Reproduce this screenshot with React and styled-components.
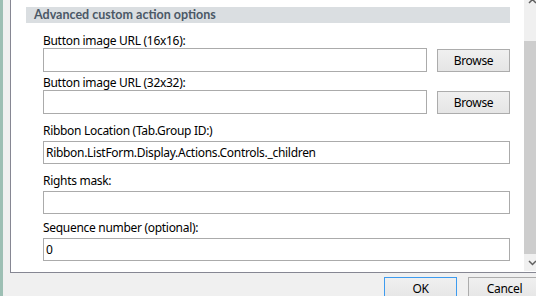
import React from 'react';
import styled, { createGlobalStyle } from 'styled-components';

const GlobalStyle = createGlobalStyle`
  html, body {
    margin: 0;
    padding: 0;
    overflow: hidden;
    background: #f0f0f0;
  }
  body {
    font-family: "Noto Sans", "Open Sans", sans-serif;
    font-size: 12px;
    letter-spacing: -0.3px;
    color: #000;
  }
`;

const Window = styled.div`
  width: 548px;
  height: 296px;
  display: flex;
  flex-direction: column;
  background: #f0f0f0;
  border-left: 3px solid #9dbfb4;
  box-sizing: border-box;
`;

const Panel = styled.div`
  display: flex;
  height: 275px;
  margin: 0 6px 0 7px;
  background: #fff;
  border: 1px solid #868793;
  border-top: none;
  box-sizing: border-box;
`;

const Content = styled.div`
  flex: 1;
  padding: 7px 14px 0 15px;
  overflow: hidden;
`;

const SectionHeader = styled.div`
  height: 16px;
  line-height: 16px;
  padding-left: 8px;
  background: #dadee1;
  color: #4b5866;
  font-family: Lato, "Noto Sans", sans-serif;
  font-weight: 700;
  font-size: 12.5px;
  letter-spacing: 0;
`;

const Fields = styled.div`
  display: flex;
  flex-direction: column;
  padding: 10px 0 0 17px;
`;

const Field = styled.div`
  display: flex;
  flex-direction: column;
  margin-top: ${p => p.$gap}px;
`;

const Label = styled.label`
  display: block;
  line-height: 15px;
  margin-bottom: ${p => (p.$tight ? 0 : 3)}px;
`;

const Row = styled.div`
  display: flex;
  align-items: center;
  gap: 10px;
`;

const TextBox = styled.input`
  flex: ${p => (p.$grow ? '1 1 auto' : 'none')};
  min-width: 0;
  height: ${p => (p.$grow ? 24 : 23)}px;
  box-sizing: border-box;
  border: 1px solid #ababab;
  padding: 0 2px;
  font-family: inherit;
  font-size: 12px;
  letter-spacing: inherit;
  color: #000;
  background: #fff;
  outline: none;
`;

const Button = styled.button`
  width: 73px;
  height: 23px;
  box-sizing: border-box;
  border: 1px solid ${p => (p.$primary ? '#3d9bef' : '#acacac')};
  background: linear-gradient(#f0f0f0, #e5e5e5);
  font-family: inherit;
  font-size: 12px;
  letter-spacing: inherit;
  color: #000;
  padding: 0;
  flex-shrink: 0;
`;

const Scrollbar = styled.div`
  width: 17px;
  display: flex;
  flex-direction: column;
  background: #f0f0f0;
  margin-bottom: 1px;
`;

const ArrowTip = styled.div`
  height: 4px;
  overflow: hidden;
  display: flex;
  justify-content: center;
  align-items: flex-end;
`;

const Track = styled.div`
  flex: 1;
  display: flex;
  flex-direction: column;
`;

const Thumb = styled.div`
  margin-top: ${p => p.$top}px;
  height: ${p => p.$height}px;
  background: #cdcdcd;
`;

const ArrowButton = styled.div`
  height: 17px;
  margin-top: auto;
  display: flex;
  align-items: center;
  justify-content: center;
`;

const Footer = styled.div`
  display: flex;
  justify-content: flex-end;
  gap: 11px;
  padding: 4px 7px 0 0;
`;

function Chevron({ up }) {
  return (
    <svg width="9" height="6" viewBox="0 0 9 6">
      <path
        d={up ? 'M1 5 L4.5 1.5 L8 5' : 'M1 1 L4.5 4.5 L8 1'}
        fill="none"
        stroke="#606060"
        strokeWidth="1.5"
      />
    </svg>
  );
}

const fields = [
  { label: 'Ribbon Location (Tab.Group ID:)', value: 'Ribbon.ListForm.Display.Actions.Controls._children', gap: 9 },
  { label: 'Rights mask:', value: '', gap: 9 },
  { label: 'Sequence number (optional):', value: '0', gap: 6 },
];

export default function App() {
  return (
    <>
      <GlobalStyle />
      <Window>
        <Panel>
          <Content>
            <SectionHeader>Advanced custom action options</SectionHeader>
            <Fields>
              <Field $gap={0}>
                <Label $tight>Button image URL (16x16):</Label>
                <Row>
                  <TextBox $grow defaultValue="" />
                  <Button>Browse</Button>
                </Row>
              </Field>
              <Field $gap={3}>
                <Label $tight>Button image URL (32x32):</Label>
                <Row>
                  <TextBox $grow defaultValue="" />
                  <Button>Browse</Button>
                </Row>
              </Field>
              {fields.map(f => (
                <Field key={f.label} $gap={f.gap}>
                  <Label>{f.label}</Label>
                  <TextBox defaultValue={f.value} />
                </Field>
              ))}
            </Fields>
          </Content>
          <Scrollbar>
            <ArrowTip>
              <Chevron up />
            </ArrowTip>
            <Track>
              <Thumb $top={37} $height={213} />
              <ArrowButton>
                <Chevron />
              </ArrowButton>
            </Track>
          </Scrollbar>
        </Panel>
        <Footer>
          <Button $primary>OK</Button>
          <Button>Cancel</Button>
        </Footer>
      </Window>
    </>
  );
}
